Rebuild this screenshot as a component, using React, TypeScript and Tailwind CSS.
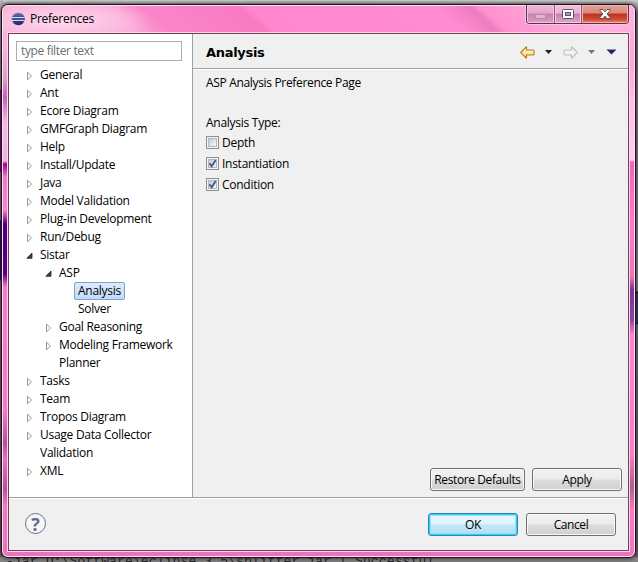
import type { ReactNode } from 'react';

type Item = { label: string; level: number; state?: 'open' | 'closed'; selected?: boolean };

const items: Item[] = [
  { label: 'General', level: 0, state: 'closed' },
  { label: 'Ant', level: 0, state: 'closed' },
  { label: 'Ecore Diagram', level: 0, state: 'closed' },
  { label: 'GMFGraph Diagram', level: 0, state: 'closed' },
  { label: 'Help', level: 0, state: 'closed' },
  { label: 'Install/Update', level: 0, state: 'closed' },
  { label: 'Java', level: 0, state: 'closed' },
  { label: 'Model Validation', level: 0, state: 'closed' },
  { label: 'Plug-in Development', level: 0, state: 'closed' },
  { label: 'Run/Debug', level: 0, state: 'closed' },
  { label: 'Sistar', level: 0, state: 'open' },
  { label: 'ASP', level: 1, state: 'open' },
  { label: 'Analysis', level: 2, selected: true },
  { label: 'Solver', level: 2 },
  { label: 'Goal Reasoning', level: 1, state: 'closed' },
  { label: 'Modeling Framework', level: 1, state: 'closed' },
  { label: 'Planner', level: 1 },
  { label: 'Tasks', level: 0, state: 'closed' },
  { label: 'Team', level: 0, state: 'closed' },
  { label: 'Tropos Diagram', level: 0, state: 'closed' },
  { label: 'Usage Data Collector', level: 0, state: 'closed' },
  { label: 'Validation', level: 0 },
  { label: 'XML', level: 0, state: 'closed' },
];

const indents = ['pl-[17px]', 'pl-[36px]', 'pl-[55px]'];

function Twisty({ state }: { state?: 'open' | 'closed' }) {
  return (
    <svg width="9" height="12" viewBox="0 0 9 12" className="shrink-0">
      {state === 'closed' && <path d="M1.5 3.2v7.6l4-3.8z" fill="#fff" stroke="#999" />}
      {state === 'open' && <path d="M6 4v5.3H.8z" fill="#404040" stroke="#262626" strokeWidth=".8" />}
    </svg>
  );
}

function TreeRow({ item }: { item: Item }) {
  return (
    <div className={`flex h-[18px] items-center ${indents[item.level]}`}>
      <Twisty state={item.state} />
      <span
        className={`ml-px h-[18px] rounded-[2px] border px-[3px] leading-[16px] ${
          item.selected ? 'border-[#7da2ce] bg-linear-to-b from-[#dcebfc] to-[#c1dbfc]' : 'border-transparent'
        }`}
      >
        {item.label}
      </span>
    </div>
  );
}

function Check({ label, on }: { label: string; on?: boolean }) {
  return (
    <div className="flex h-[21px] items-center gap-[3px]">
      <svg width="13" height="13" viewBox="0 0 13 13">
        <defs>
          <linearGradient id="well" x1="0" y1="0" x2="1" y2="1">
            <stop offset="0" stopColor="#c3c8d0" />
            <stop offset="1" stopColor="#f8f8f8" />
          </linearGradient>
        </defs>
        <rect x=".5" y=".5" width="12" height="12" fill="#f4f4f4" stroke="#8e8f8f" />
        <rect x="2.5" y="2.5" width="8" height="8" fill="url(#well)" stroke="#b5b9c0" />
        {on && <path d="M3.4 6.2l2.3 3.1 4-6.3" fill="none" stroke="#435a9b" strokeWidth="1.9" />}
      </svg>
      <span>{label}</span>
    </div>
  );
}

function Button({ children, width, primary }: { children: ReactNode; width: string; primary?: boolean }) {
  return (
    <button
      className={`h-[23px] rounded-[3px] border text-center leading-[21px] tracking-[-0.4px] whitespace-nowrap ${width} ${
        primary
          ? 'border-[#3c7fb1] bg-[linear-gradient(#eef8fd_0%,#def2fb_48%,#c5e7f8_52%,#b0ddf5_100%)] shadow-[inset_0_0_0_1px_#27d2fa,inset_0_0_0_2px_#8fe4fb]'
          : 'border-[#707070] bg-[linear-gradient(#f2f2f2_0%,#ebebeb_48%,#dddddd_52%,#cfcfcf_100%)] shadow-[inset_0_0_0_1px_#f8f8f8]'
      }`}
    >
      {children}
    </button>
  );
}

function EclipseLogo() {
  return (
    <svg width="14" height="14" viewBox="0 0 14 14">
      <defs>
        <linearGradient id="orb" x1="0" y1="0" x2="0" y2="1">
          <stop offset="0" stopColor="#6e78b5" />
          <stop offset=".5" stopColor="#343b84" />
          <stop offset="1" stopColor="#232a6c" />
        </linearGradient>
      </defs>
      <ellipse cx="6" cy="7" rx="5.8" ry="6" fill="#b79aca" />
      <circle cx="7.5" cy="7" r="6.2" fill="url(#orb)" />
      <path d="M1 5.5h12.6M1 8.5h12.5" stroke="#d3dbf2" strokeWidth="1" />
      <path d="M1.5 7h12.2" stroke="#4a5aa3" strokeWidth="1.6" />
    </svg>
  );
}

function CaptionButtons() {
  return (
    <div className="mr-[6px] flex h-[19px] overflow-hidden rounded-b-[4px] border border-t-0 border-[#5d3049] shadow-[0_0_0_1px_#ffc5e5]">
      <div className="flex w-[28px] items-center justify-center border-r border-[#90597b] bg-[linear-gradient(#edb9d8_0%,#e5a4ca_45%,#c880ad_50%,#daa1c5_100%)] pt-[5px] shadow-[inset_0_0_0_1px_#f1c8df]">
        <span className="h-[5px] w-[11px] rounded-[1px] border border-[#b48aa5] bg-[#dfb5ce]" />
      </div>
      <div className="flex w-[27px] items-center justify-center border-r border-[#90597b] bg-[linear-gradient(#f1c2de_0%,#eab0d3_45%,#ca7dad_50%,#dfa6cb_100%)] shadow-[inset_0_0_0_1px_#f4d0e5]">
        <svg width="12" height="10" viewBox="0 0 12 10">
          <rect x=".5" y=".5" width="11" height="9" rx="1" fill="#fff" stroke="#53566a" />
          <rect x="3.5" y="3.5" width="5" height="3" fill="#d38fb8" stroke="#53566a" />
        </svg>
      </div>
      <div className="flex w-[46px] items-center justify-center bg-[linear-gradient(#e4a39b_0%,#d9877c_45%,#bd301c_50%,#d14b34_80%,#e78b76_100%)] shadow-[inset_0_0_0_1px_#eeb5a9]">
        <svg width="12" height="10" viewBox="0 0 12 10">
          <path
            d="M1 .5h3l2 2.4L8 .5h3v1L8.1 5l2.9 3.5v1H8L6 7.1 4 9.5H1v-1L3.9 5 1 1.5z"
            fill="#fff"
            stroke="#53566a"
          />
        </svg>
      </div>
    </div>
  );
}

function Arrow({ enabled }: { enabled?: boolean }) {
  return (
    <svg width="15" height="13" viewBox="0 0 15 13" className={enabled ? '' : '-scale-x-100'}>
      <defs>
        <linearGradient id="gold" x1="0" y1="0" x2="0" y2="1">
          <stop offset="0" stopColor="#fffbe5" />
          <stop offset="1" stopColor="#f5d873" />
        </linearGradient>
      </defs>
      <path
        d="M.7 6.5L6 1h.5v3h6.8l.7.7v3.6l-.7.7H6.5v3H6z"
        fill={enabled ? 'url(#gold)' : '#f3f3f1'}
        stroke={enabled ? '#b97b12' : '#bdbdb8'}
        strokeWidth="1.1"
      />
    </svg>
  );
}

function Caret({ color, wide }: { color: string; wide?: boolean }) {
  return (
    <svg width={wide ? 11 : 7} height={wide ? 6 : 4} viewBox={wide ? '0 0 11 6' : '0 0 7 4'}>
      <path d={wide ? 'M.5 .5h10L5.5 5.5z' : 'M0 0h7L3.5 4z'} fill={color} />
    </svg>
  );
}

export default function App() {
  return (
    <div className="relative h-[562px] w-[638px] overflow-hidden bg-[linear-gradient(#d5d5d5_0,#a9a9a9_4px,#8b8791_90px,#77727d_100%)] font-['Open_Sans','Noto_Sans',sans-serif] text-[12px] tracking-[-0.27px] text-black">
      <div className="absolute top-0 left-0 h-[562px] w-[3px] bg-[linear-gradient(#b5b3b6_0,#8d8a8e_89px,#76007d_90px,#76007d_172px,#767479_173px,#767479_220px,#15005f_221px,#15005f_280px,#77727b_281px,#5d5a60_100%)]" />
      <div className="absolute top-0 right-0 h-[562px] w-[3px] bg-[linear-gradient(#c8c8c8_0,#77717a_15px,#8d8b8e_291px,#000_292px,#293579_294px,#293579_322px,#000_323px,#77757a_325px,#5d5a60_100%)]" />
      <div className="absolute right-0 bottom-0 left-0 h-[5px] overflow-hidden bg-[#858585] pl-[6px] font-['Liberation_Mono',monospace] text-[13px] leading-[9px] tracking-[0.13px] whitespace-pre text-[#242227]">
        -jar D:\Software\eclipse 3.5\splitter.jar | Successful
      </div>

      <div className="absolute top-[4px] left-[1px] flex h-[554px] w-[635px] flex-col overflow-hidden rounded-[7px] border border-[#24101e] bg-[linear-gradient(#f7b0d9_0,#f6b4db_40px,#dda3cf_73px,#c064b8_93px,#d68aca_103px,#f1bce0_118px,#e9b6dd_156px,#9b0090_159px,#f579c2_172px,#ff82ca_205px,#4b0083_219px,#55008b_269px,#ff79c5_282px,#fb79c2_405px,#b45496_438px,#ed6fb8_454px,#b65396_484px,#f07abd_500px,#ed72bc_100%)] shadow-[0_0_5px_#262126]">
        <div className="absolute top-0 right-0 h-[552px] w-[8px] bg-[linear-gradient(#ffb2dc_0,#ffa5d8_60px,#ffbedf_95px,#ffd0ea_155px,#ee67b5_157px,#ff7bc7_220px,#e977b7_272px,#783794_284px,#81469f_314px,#ff82ca_330px,#f780c2_450px,#ac5f8c_481px,#ff79c0_505px,#ed77ba_100%)]" />
        <div className="pointer-events-none absolute inset-0 rounded-[6px] border border-[#ffe0f0]" />

        <div className="relative mx-px mt-px flex h-[26px] shrink-0 items-start justify-between rounded-t-[5px] bg-[radial-gradient(ellipse_90px_22px_at_60px_15px,#ffe6f3cc_0%,#ffd4ea88_55%,#ffffff00_100%),linear-gradient(42deg,#f5b2d8_0%,#f9a9d7_20%,#fb85c9_25%,#f97bc3_40%,#ff87ce_41.5%,#ff8bd0_66%,#ff8bd0_70%,#ed7dc0_75%,#ff91d0_76.5%,#ffb0dc_90%)]">
          <div className="flex h-[26px] items-center gap-[5px] pl-[8px]">
            <EclipseLogo />
            <span>Preferences</span>
          </div>
          <div className="-mt-px -mr-px">
            <CaptionButtons />
          </div>
        </div>

        <div className="relative mx-[5px] flex h-[520px] shrink-0 flex-col border border-[#ffd5eb] bg-[#f0f0f0]">
          <div className="flex h-[518px] flex-col border border-[#763d61]">
            <div className="flex h-[463px]">
              <aside className="flex h-[463px] w-[184px] shrink-0 flex-col border-r border-[#a0a0a0] bg-white pt-[7px]">
                <input
                  className="ml-[7px] h-[20px] w-[166px] border border-[#abadb3] bg-white px-[4px] pb-px text-[12px] tracking-[-0.35px] placeholder:text-[#6d6d6d]"
                  placeholder="type filter text"
                />
                <nav className="mt-[5px] flex flex-col">
                  {items.map((item) => (
                    <TreeRow key={item.label} item={item} />
                  ))}
                </nav>
              </aside>
              <section className="flex flex-1 flex-col">
                <header className="flex h-[35px] shrink-0 items-center justify-between border-b border-[#a0a0a0] pr-[11px] pl-[13px] shadow-[0_1px_#fff]">
                  <h1 className="pt-[3px] font-['DejaVu_Sans',sans-serif] text-[13px] font-bold tracking-[-0.3px]">Analysis</h1>
                  <div className="flex items-center pt-[2px]">
                    <Arrow enabled />
                    <span className="ml-[10px]"><Caret color="#202020" /></span>
                    <span className="ml-[11px]"><Arrow /></span>
                    <span className="ml-[10px]"><Caret color="#777" /></span>
                    <span className="ml-[11px]"><Caret color="#28256b" wide /></span>
                  </div>
                </header>
                <div className="flex flex-1 flex-col px-[13px]">
                  <p className="mt-[5px] leading-[18px] tracking-[-0.33px]">ASP Analysis Preference Page</p>
                  <p className="mt-[22px] leading-[18px]">Analysis Type:</p>
                  <Check label="Depth" />
                  <Check label="Instantiation" on />
                  <Check label="Condition" on />
                </div>
                <div className="mr-[6px] mb-[6px] flex justify-end gap-[7px]">
                  <Button width="w-[95px]">Restore Defaults</Button>
                  <Button width="w-[90px]">Apply</Button>
                </div>
              </section>
            </div>
            <footer className="flex h-[53px] items-start justify-between border-t border-[#a0a0a0] pr-[12px] pl-[16px] shadow-[inset_0_1px_#fff]">
              <div className="mt-[15px] flex size-[21px] items-center justify-center rounded-full border border-[#60748d] bg-[#f7f7f7] text-[18px] leading-none font-bold text-[#5b6f8c]">
                ?
              </div>
              <div className="mt-[15px] flex gap-[8px]">
                <Button width="w-[90px]" primary>OK</Button>
                <Button width="w-[90px]">Cancel</Button>
              </div>
            </footer>
          </div>
        </div>
      </div>
    </div>
  );
}
